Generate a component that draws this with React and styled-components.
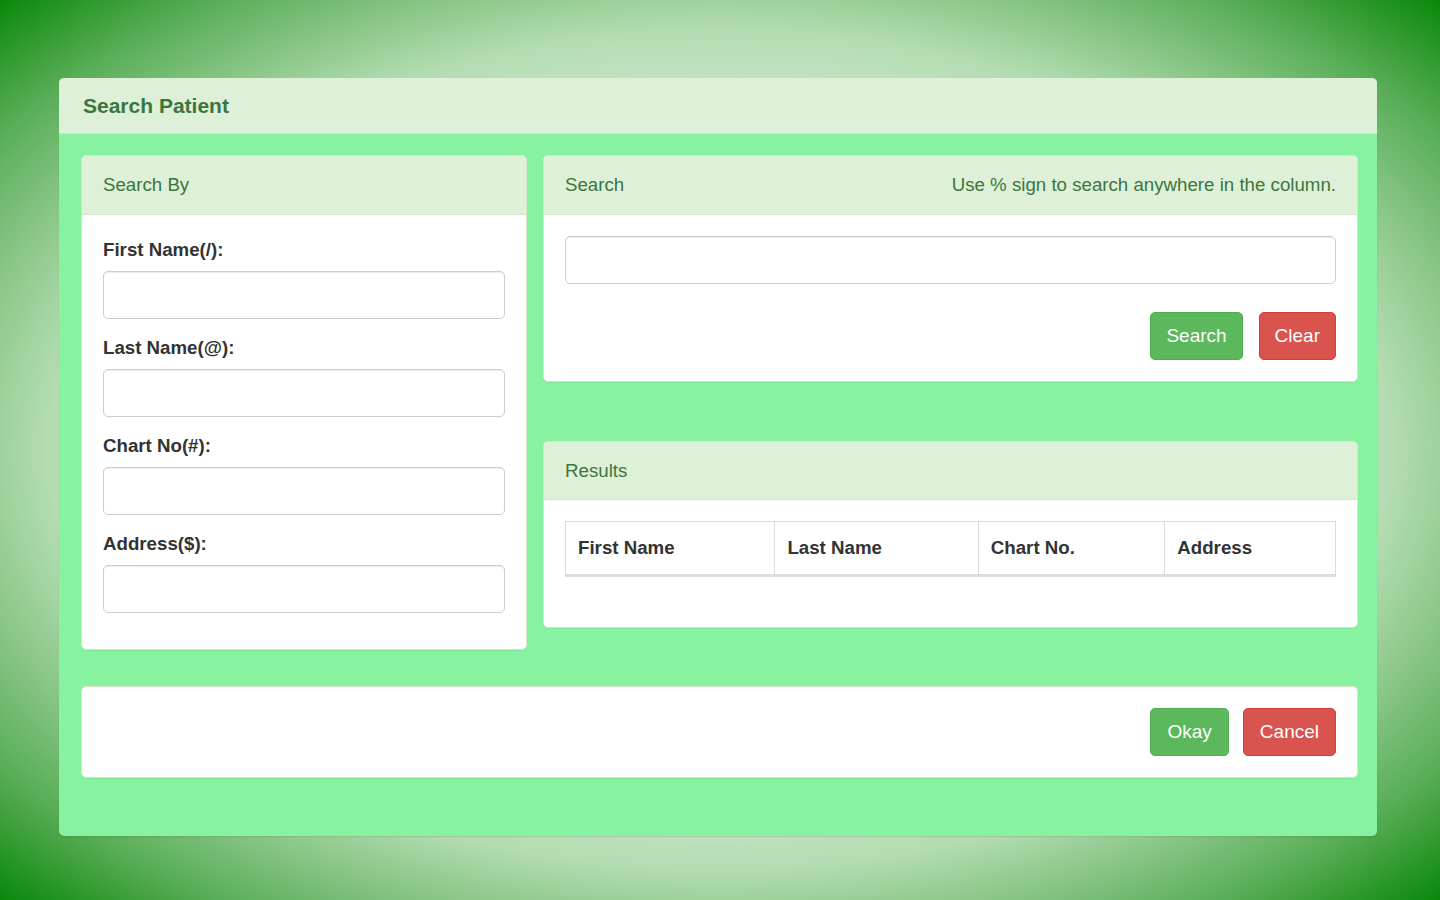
import React from "react";
import styled, { createGlobalStyle } from "styled-components";

const GlobalStyle = createGlobalStyle`
  html, body {
    margin: 0;
    padding: 0;
    height: 100%;
  }
  body {
    font-family: "Liberation Sans", Arial, sans-serif;
    background: radial-gradient(
      ellipse farthest-corner at 50% 50%,
      #ffffff 0%,
      #eef8ee 35%,
      #b3dcb1 66%,
      #5aae58 86%,
      #0a880a 100%
    );
    min-height: 900px;
  }
`;

const Page = styled.div`
  width: 1440px;
  height: 900px;
  padding: 78px 63px 0 59px;
  box-sizing: border-box;
`;

const Dialog = styled.div`
  width: 1318px;
  border-radius: 5px;
  overflow: hidden;
  background: #87f29f;
  box-shadow: 0 1px 2px rgba(0, 0, 0, 0.1);
`;

const DialogHeader = styled.div`
  height: 56px;
  box-sizing: border-box;
  padding: 0 24px;
  display: flex;
  align-items: center;
  background: #dff0d8;
  border-bottom: 1px solid #cfe6c4;
  color: #3c763d;
  font-size: 21px;
  font-weight: bold;
`;

const DialogBody = styled.div`
  padding: 21px 19px 58px 22px;
  display: flex;
  flex-direction: column;
  gap: 36px;
`;

const TopRow = styled.div`
  display: grid;
  grid-template-columns: 446px 1fr;
  gap: 16px;
  align-items: start;
`;

const RightColumn = styled.div`
  display: flex;
  flex-direction: column;
  gap: 59px;
`;

const Panel = styled.div`
  background: #fff;
  border: 1px solid #d6e9c6;
  border-radius: 5px;
  overflow: hidden;
  box-shadow: 0 1px 1px rgba(0, 0, 0, 0.05);
`;

const PanelHeading = styled.div`
  height: ${(p) => p.$h || 59}px;
  box-sizing: border-box;
  padding: 0 21px;
  display: flex;
  align-items: center;
  justify-content: space-between;
  background: #dff0d8;
  border-bottom: 1px solid #d6e9c6;
  color: #3c763d;
  font-size: 18.7px;
`;

const PanelBody = styled.div`
  padding: ${(p) => p.$pad || "21px 21px 36px"};
`;

const FormGroup = styled.div`
  margin-bottom: ${(p) => (p.$last ? 0 : 15)}px;
`;

const Label = styled.label`
  display: block;
  font-size: 18.7px;
  line-height: 27px;
  font-weight: bold;
  color: #333;
  margin-bottom: 8px;
`;

const Input = styled.input`
  display: block;
  width: 100%;
  height: 48px;
  box-sizing: border-box;
  border: 1px solid #ccc;
  border-radius: 5px;
  box-shadow: inset 0 1px 1px rgba(0, 0, 0, 0.075);
  padding: 8px 16px;
  font-size: 18px;
  font-family: inherit;
  outline: none;
`;

const ButtonRow = styled.div`
  display: flex;
  justify-content: flex-end;
  gap: ${(p) => p.$gap || 16}px;
  margin-top: ${(p) => p.$mt || 0}px;
`;

const Button = styled.button`
  height: 48px;
  padding: 0 ${(p) => p.$px || 16}px;
  border-radius: 5px;
  font-size: 19px;
  font-family: inherit;
  color: #fff;
  cursor: pointer;
  background: ${(p) => (p.$variant === "danger" ? "#d9534f" : "#5cb85c")};
  border: 1px solid ${(p) => (p.$variant === "danger" ? "#d43f3a" : "#4cae4c")};
`;

const Table = styled.table`
  width: 100%;
  border-collapse: collapse;
  border: 1px solid #ddd;
  margin-bottom: 28px;
`;

const Th = styled.th`
  height: 54px;
  box-sizing: border-box;
  padding: 0 12px;
  text-align: left;
  font-size: 18.7px;
  font-weight: bold;
  color: #333;
  border: 1px solid #ddd;
  border-bottom: 3px solid #ddd;
`;

const columns = [
  { name: "First Name", width: 210 },
  { name: "Last Name", width: 204 },
  { name: "Chart No.", width: 187 },
  { name: "Address", width: 171 },
];

const fields = ["First Name(/):", "Last Name(@):", "Chart No(#):", "Address($):"];

const App = () => {
  return (
    <Page>
      <GlobalStyle />
      <Dialog>
        <DialogHeader>Search Patient</DialogHeader>
        <DialogBody>
          <TopRow>
            <Panel>
              <PanelHeading>Search By</PanelHeading>
              <PanelBody>
                {fields.map((f, i) => (
                  <FormGroup key={f} $last={i === fields.length - 1}>
                    <Label>{f}</Label>
                    <Input type="text" />
                  </FormGroup>
                ))}
              </PanelBody>
            </Panel>
            <RightColumn>
              <Panel>
                <PanelHeading>
                  <span>Search</span>
                  <span>Use % sign to search anywhere in the column.</span>
                </PanelHeading>
                <PanelBody $pad="21px 21px 21px">
                  <Input type="text" />
                  <ButtonRow $mt={28}>
                    <Button $px={15}>Search</Button>
                    <Button $variant="danger" $px={15}>
                      Clear
                    </Button>
                  </ButtonRow>
                </PanelBody>
              </Panel>
              <Panel>
                <PanelHeading $h={58}>Results</PanelHeading>
                <PanelBody $pad="21px 21px 22px">
                  <Table>
                    <thead>
                      <tr>
                        {columns.map((c) => (
                          <Th key={c.name} style={{ width: c.width }}>
                            {c.name}
                          </Th>
                        ))}
                      </tr>
                    </thead>
                  </Table>
                </PanelBody>
              </Panel>
            </RightColumn>
          </TopRow>
          <Panel>
            <PanelBody $pad="21px 21px 21px">
              <ButtonRow $gap={14}>
                <Button $px={16}>Okay</Button>
                <Button $variant="danger" $px={16}>
                  Cancel
                </Button>
              </ButtonRow>
            </PanelBody>
          </Panel>
        </DialogBody>
      </Dialog>
    </Page>
  );
};

export default App;
